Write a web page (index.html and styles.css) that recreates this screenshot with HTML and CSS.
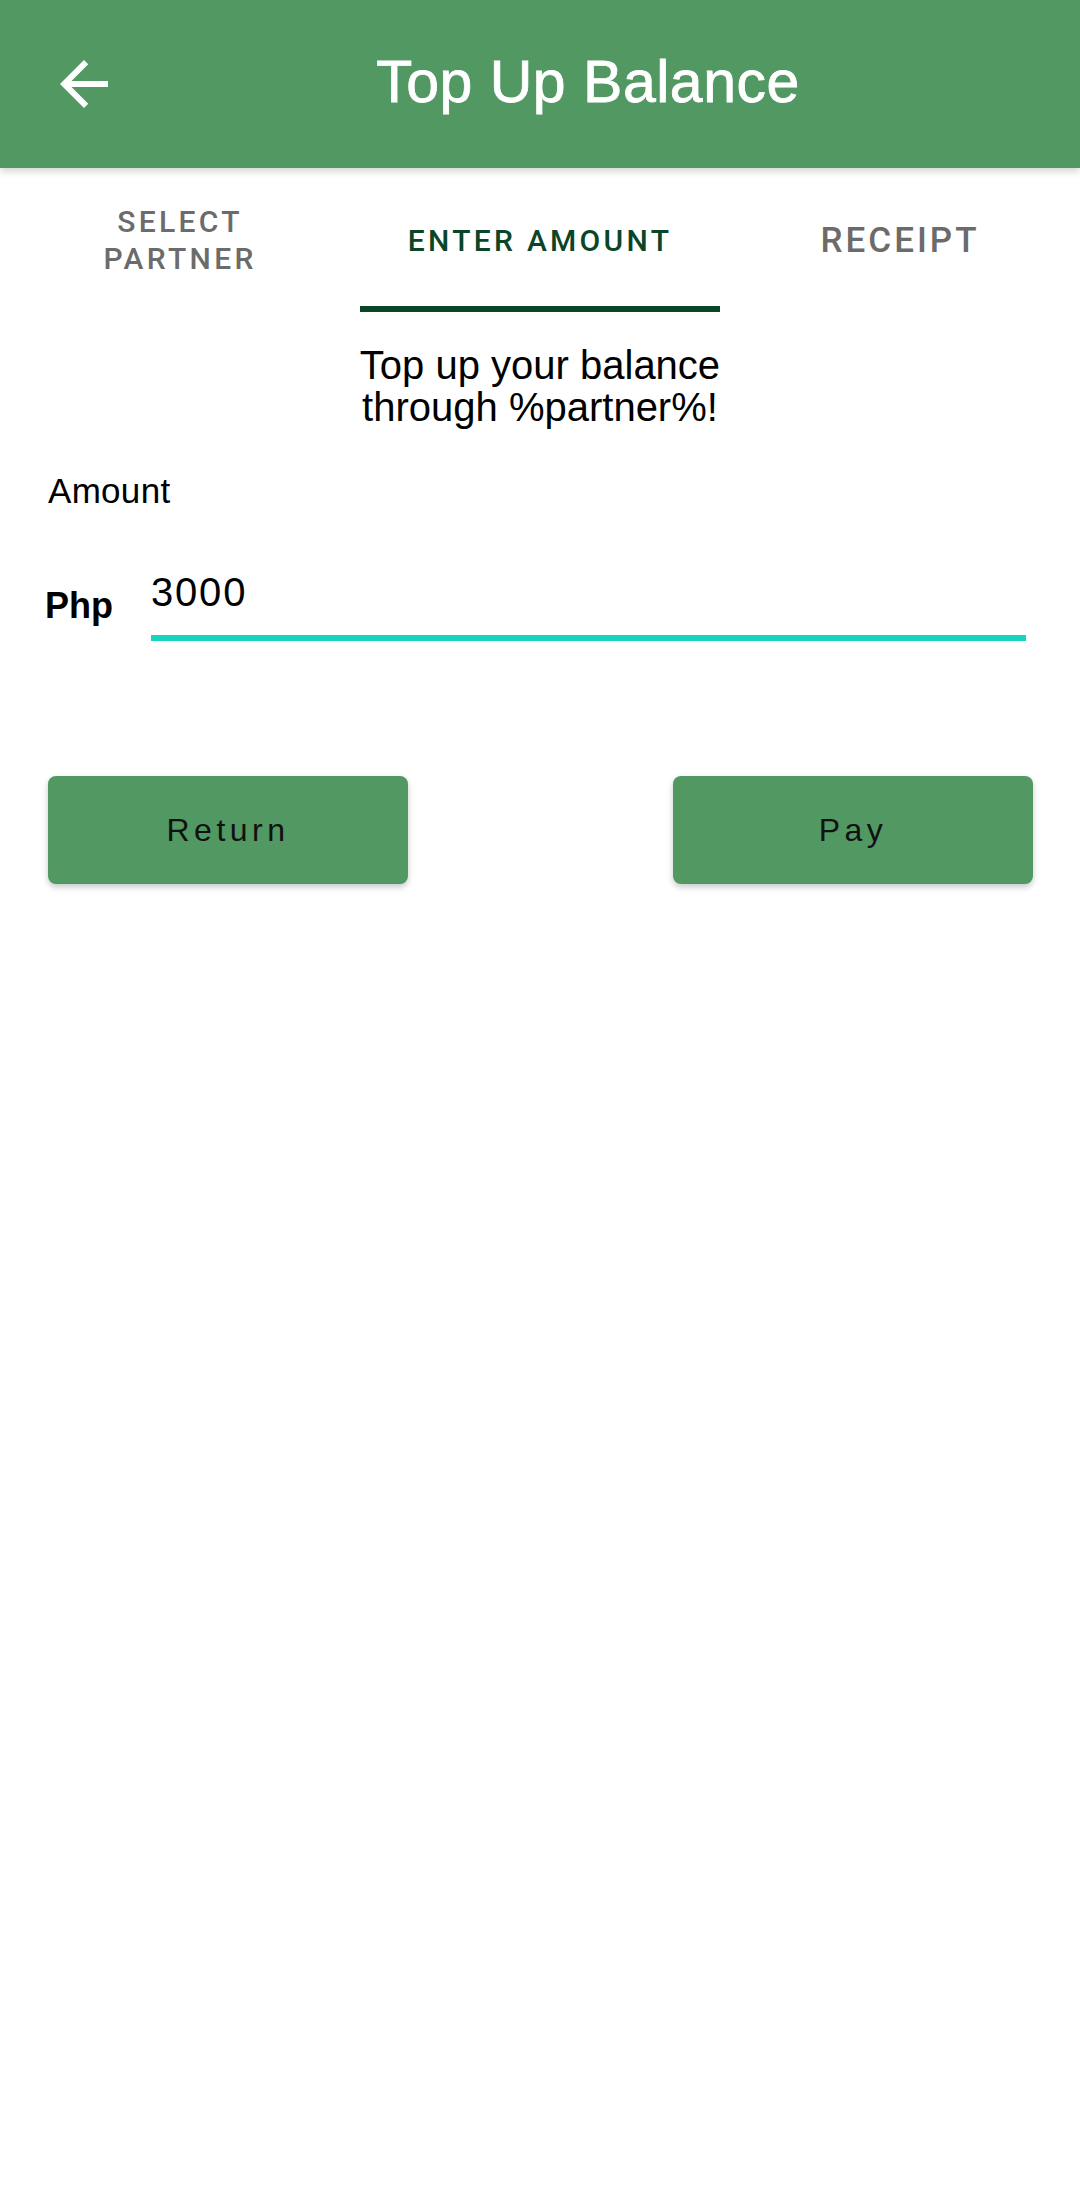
FILE: index.html
```html
<!DOCTYPE html>
<html>
<head>
<meta charset="utf-8">
<link rel="stylesheet" href="styles.css">
</head>
<body>
<header class="appbar">
  <button class="back" aria-label="Back">
    <svg viewBox="0 0 24 24" width="72" height="72"><path d="M20 11H7.83l5.59-5.59L12 4l-8 8 8 8 1.41-1.41L7.83 13H20v-2z" fill="#ffffff"/></svg>
  </button>
  <h1 class="title">Top Up Balance</h1>
</header>
<nav class="tabs">
  <div class="tab">SELECT<br>PARTNER</div>
  <div class="tab active">ENTER AMOUNT</div>
  <div class="tab large">RECEIPT</div>
</nav>
<main class="content">
  <p class="intro">Top up your balance<br>through %partner%!</p>
  <div class="label">Amount</div>
  <div class="amount-row">
    <span class="currency">Php</span>
    <div class="field"><span class="value">3000</span></div>
  </div>
  <div class="actions">
    <button class="btn">Return</button>
    <button class="btn">Pay</button>
  </div>
</main>
</body>
</html>
```
FILE: styles.css
```css
* { box-sizing: border-box; }
html, body { margin: 0; padding: 0; background: #ffffff; }
body {
  width: 1080px;
  height: 2208px;
  font-family: "Liberation Sans", Arial, sans-serif;
  color: #000;
  overflow: hidden;
}
.appbar {
  height: 168px;
  background: #519862;
  display: flex;
  align-items: center;
  position: relative;
  z-index: 2;
  box-shadow: 0 3px 8px rgba(0,0,0,0.18);
}
.back {
  width: 72px;
  height: 72px;
  margin-left: 48px;
  padding: 0;
  border: 0;
  background: none;
  display: flex;
}
.title {
  flex: 1;
  margin: 0 0 4px 0;
  text-align: center;
  color: #ffffff;
  font-weight: normal;
  font-size: 59px;
  letter-spacing: 0.5px;
  -webkit-text-stroke: 0.8px #ffffff;
  transform: translateX(-12px);
}
.tabs {
  display: grid;
  grid-template-columns: repeat(3, 1fr);
  height: 144px;
}
.tab {
  display: flex;
  align-items: center;
  justify-content: center;
  text-align: center;
  font-family: Roboto, "Liberation Sans", sans-serif;
  font-weight: 500;
  font-size: 30px;
  line-height: 37px;
  letter-spacing: 3.3px;
  color: #6b6b6b;
  border-bottom: 6px solid transparent;
  padding-top: 6px;
}
.tab.large {
  font-size: 35px;
  letter-spacing: 3px;
}
.tab.active {
  color: #0b4527;
  border-bottom-color: #0b4527;
}
.content {
  padding: 0 48px;
}
.intro {
  margin: 32px 0 0 0;
  text-align: center;
  font-size: 40px;
  line-height: 42px;
}
.label {
  margin-top: 43px;
  font-size: 35px;
  line-height: 40px;
  letter-spacing: 0.3px;
}
.amount-row {
  display: flex;
  align-items: flex-end;
  margin-top: 58px;
}
.currency {
  font-weight: bold;
  font-size: 36px;
  width: 106px;
  margin-left: -3px;
  padding-bottom: 14px;
}
.field {
  flex: 0 0 875px;
  border-bottom: 6px solid #15d5c1;
  padding-bottom: 20px;
}
.value {
  font-size: 40px;
  letter-spacing: 1.8px;
  line-height: 46px;
  display: block;
}
.actions {
  display: flex;
  justify-content: space-between;
  margin-top: 135px;
}
.btn {
  width: 360px;
  height: 108px;
  border: 0;
  border-radius: 8px;
  background: #519862;
  box-shadow: 0 3px 6px rgba(0,0,0,0.22);
  font-family: "Liberation Sans", Arial, sans-serif;
  font-size: 32px;
  letter-spacing: 4.5px;
  color: #111;
  padding: 0;
}
.btn + .btn { margin-right: -1px; }
```
